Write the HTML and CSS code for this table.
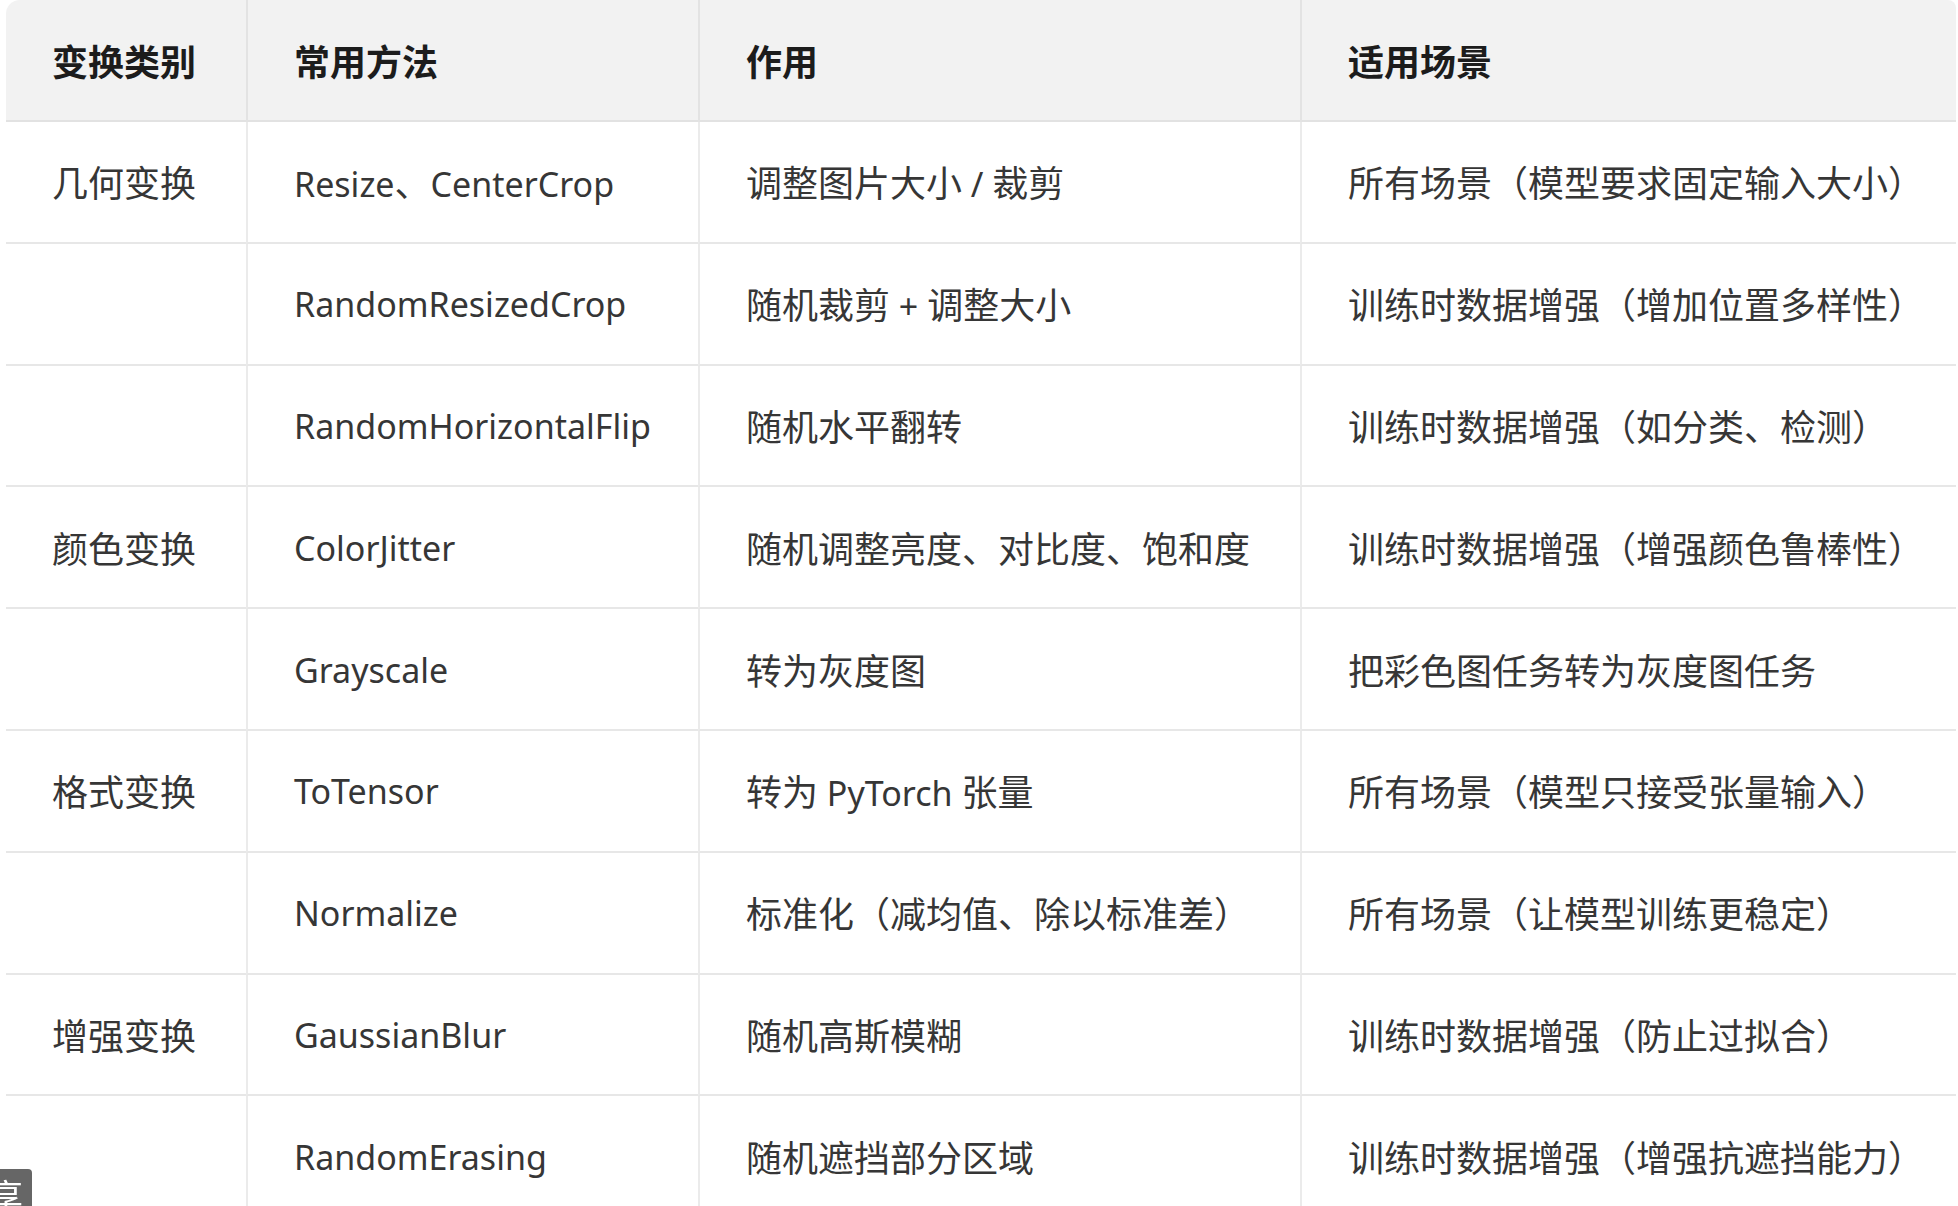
FILE: index.html
```html
<!DOCTYPE html>
<html lang="zh-CN">
<head>
<meta charset="utf-8">
<title>图像变换</title>
<link rel="stylesheet" href="styles.css">
</head>
<body>
<div class="page">
  <table class="tbl">
    <colgroup>
      <col class="c1"><col class="c2"><col class="c3"><col class="c4">
    </colgroup>
    <thead>
      <tr><th>变换类别</th><th>常用方法</th><th>作用</th><th>适用场景</th></tr>
    </thead>
    <tbody>
      <tr><td>几何变换</td><td><span class="en">Resize</span>、<span class="en">CenterCrop</span></td><td>调整图片大小<span class="en"> / </span>裁剪</td><td>所有场景（模型要求固定输入大小）</td></tr>
      <tr><td></td><td><span class="en">RandomResizedCrop</span></td><td>随机裁剪<span class="en"> + </span>调整大小</td><td>训练时数据增强（增加位置多样性）</td></tr>
      <tr><td></td><td><span class="en">RandomHorizontalFlip</span></td><td>随机水平翻转</td><td>训练时数据增强（如分类、检测）</td></tr>
      <tr><td>颜色变换</td><td><span class="en">ColorJitter</span></td><td>随机调整亮度、对比度、饱和度</td><td>训练时数据增强（增强颜色鲁棒性）</td></tr>
      <tr><td></td><td><span class="en">Grayscale</span></td><td>转为灰度图</td><td>把彩色图任务转为灰度图任务</td></tr>
      <tr><td>格式变换</td><td><span class="en">ToTensor</span></td><td>转为<span class="en"> PyTorch </span>张量</td><td>所有场景（模型只接受张量输入）</td></tr>
      <tr><td></td><td><span class="en">Normalize</span></td><td>标准化（减均值、除以标准差）</td><td>所有场景（让模型训练更稳定）</td></tr>
      <tr><td>增强变换</td><td><span class="en">GaussianBlur</span></td><td>随机高斯模糊</td><td>训练时数据增强（防止过拟合）</td></tr>
      <tr><td></td><td><span class="en">RandomErasing</span></td><td>随机遮挡部分区域</td><td>训练时数据增强（增强抗遮挡能力）</td></tr>
    </tbody>
  </table>
</div>
<div class="share"><span class="share-text">享</span></div>
</body>
</html>
```
FILE: styles.css
```css
html, body {
  margin: 0;
  padding: 0;
  background: #ffffff;
  overflow: hidden;
}
body {
  font-family: "Noto Sans", "Noto Sans CJK SC", sans-serif;
  color: #333333;
}
.page {
  padding-left: 6px;
  width: 1952px;
}
.tbl {
  width: 1950px;
  table-layout: fixed;
  border-collapse: separate;
  border-spacing: 0;
  font-size: 36px;
}
.c1 { width: 240px; }
.c2 { width: 452px; }
.c3 { width: 602px; }
.c4 { width: 656px; }
.tbl th,
.tbl td {
  text-align: left;
  vertical-align: middle;
  padding: 0 0 0 46px;
  white-space: nowrap;
  border-bottom: 2px solid #e7e7e7;
  border-left: 2px solid #ebebeb;
}
.tbl th:first-child,
.tbl td:first-child {
  border-left: none;
}
.tbl th {
  height: 120px;
  background: #f2f2f2;
  font-weight: 700;
  color: #1c1c1c;
  border-bottom-color: #e2e2e2;
  border-left-color: #e3e3e3;
}
.tbl th:first-child { border-top-left-radius: 14px; }
.tbl th:last-child { border-top-right-radius: 8px; }
.tbl td {
  height: 119.8px;
  color: #363636;
}
.en {
  font-size: 34px;
}
.share {
  position: fixed;
  left: 0;
  bottom: 0;
  width: 32px;
  height: 37px;
  background: #666666;
  border-top-right-radius: 4px;
  overflow: hidden;
  color: #ffffff;
  font-family: "Noto Sans CJK SC", sans-serif;
  font-size: 34px;
  line-height: 1;
}
.share-text {
  display: block;
  margin-left: -11px;
  margin-top: 9px;
}
```
